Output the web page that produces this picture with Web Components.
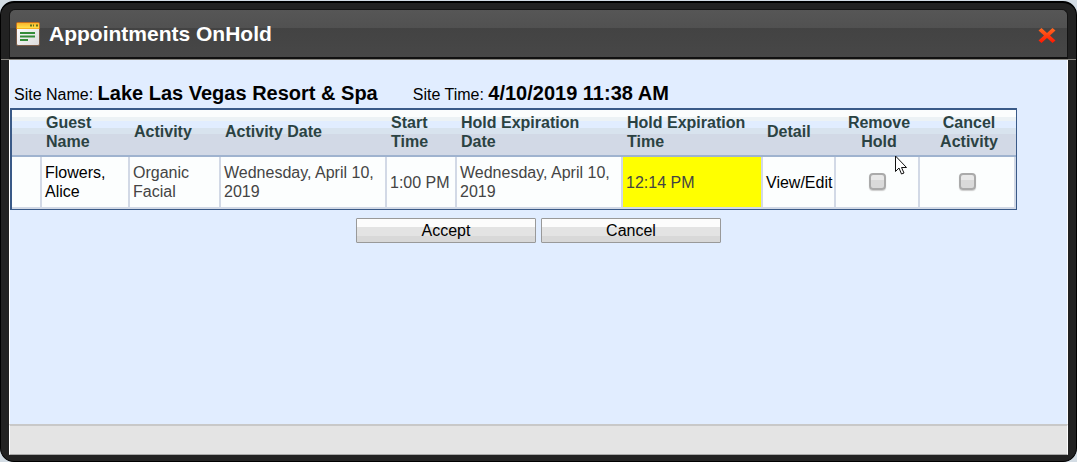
<!DOCTYPE html>
<html lang="en">
<head>
<meta charset="utf-8">
<title>Appointments OnHold</title>
<style>
    html, body {
        margin: 0;
        height: 100%;
    }
    body {
        background: #d3dce4;
        font-family: "Liberation Sans", Arial, sans-serif;
        font-size: 16px;
        line-height: 19px;
        color: #000;
        overflow: hidden;
    }
</style>
</head>
<body>
<modal-window heading="Appointments OnHold">
    <site-info></site-info>
    <hold-table></hold-table>
    <action-bar></action-bar>
</modal-window>
<mouse-pointer></mouse-pointer>

<script>
class ModalWindow extends HTMLElement {
    constructor() {
        super()
        this.attachShadow({ mode: 'open' })
    }

    connectedCallback() {
        this.render()
    }

    static get styles() {
        return `
        :host {
            display: block;
            box-sizing: border-box;
            height: 100vh;
            padding-top: 1px;
        }
        .frame {
            box-sizing: border-box;
            height: 100%;
            display: flex;
            flex-direction: column;
            background: #222;
            border: 1px solid #000;
            border-top-width: 2px;
            border-bottom-width: 1px;
            border-radius: 14px;
            padding: 6px 8px;
        }
        header {
            box-sizing: border-box;
            height: 50px;
            flex: none;
            display: flex;
            align-items: center;
            padding: 0 11px 0 6px;
            border: 1px solid #141414;
            border-bottom: 2px solid #111;
            border-radius: 6px 6px 0 0;
            background: linear-gradient(#565656, #515151 18px, #434343 18px, #474747);
        }
        .rule {
            flex: none;
            height: 1px;
            margin: 0 -8px;
            background: #8a8882;
        }
        h1 {
            flex: 1;
            margin: 0 0 0 9px;
            font-size: 21px;
            line-height: 24px;
            color: #fff;
        }
        button {
            width: 18px;
            height: 18px;
            margin-top: 4px;
            padding: 0;
            border: 0;
            background: none;
        }
        svg {
            display: block;
        }
        main {
            flex: 1;
            padding: 20px 0 0;
            background: #e1edff;
            border-left: 1px solid #fff;
            border-right: 1px solid #fff;
        }
        footer {
            flex: none;
            height: 28px;
            background: #e4e4e4;
            border-top: 2px solid #c8c8c8;
            border-left: 1px solid #fff;
            border-right: 1px solid #fff;
            border-bottom: 1px solid #a8a8a8;
        }
        `
    }

    render() {
        this.shadowRoot.innerHTML = `
        <style>${ModalWindow.styles}</style>
        <div class="frame">
            <header>
                <svg width="24" height="24" viewBox="0 0 24 24" aria-hidden="true">
                    <defs>
                        <linearGradient id="bar" x2="0" y2="1"><stop stop-color="#f9b52c"/><stop offset="1" stop-color="#ffe04a"/></linearGradient>
                        <linearGradient id="sheet" x2="1" y2="1"><stop stop-color="#fff"/><stop offset="1" stop-color="#dcdcdc"/></linearGradient>
                    </defs>
                    <rect x=".5" y=".5" width="23" height="23" rx="1.5" fill="url(#sheet)" stroke="#7a5c48"/>
                    <path d="M1 1h22v5H1z" fill="url(#bar)"/>
                    <path d="M.5 7V1.500q0-1 1-1h21q1 0 1 1V7" fill="none" stroke="#c5701c"/>
                    <path d="M1 6.500h22" stroke="#f5b020"/>
                    <path d="M14 3.500h2M17 3.500h1M20 3.500h2" stroke="#5f7420" stroke-width="2"/>
                    <path d="M4 11h15M4 14.500h15M4 18h8" stroke="#348c38" stroke-width="2"/>
                </svg>
                <h1>${this.getAttribute('heading')}</h1>
                <button type="button" aria-label="Close">
                    <svg width="18" height="18" viewBox="0 0 18 18">
                        <defs><linearGradient id="red" x2="0" y2="1"><stop stop-color="#ff6a20"/><stop offset="1" stop-color="#ff1500"/></linearGradient></defs>
                        <path d="M.5 3.500L3.500 1 9 6l5.500-5 3 2.500L12 8.500l5.500 5-3 2.500L9 11l-5.500 5-3-2.500 5.500-5z" fill="url(#red)"/>
                    </svg>
                </button>
            </header>
            <div class="rule"></div>
            <main><slot></slot></main>
            <footer></footer>
        </div>`
    }
}

customElements.define('modal-window', ModalWindow)


class SiteInfo extends HTMLElement {
    constructor() {
        super()
        this.attachShadow({ mode: 'open' })
    }

    connectedCallback() {
        this.shadowRoot.innerHTML = `
        <style>
        :host {
            display: flex;
            align-items: baseline;
            gap: 35px;
            padding: 1px 0 1px 4px;
            line-height: 25px;
        }
        b {
            font-size: 20px;
        }
        </style>
        <span>Site Name: <b>Lake Las Vegas Resort &amp; Spa</b></span>
        <span>Site Time: <b>4/10/2019 11:38 AM</b></span>`
    }
}

customElements.define('site-info', SiteInfo)


class HoldTable extends HTMLElement {
    constructor() {
        super()
        this.attachShadow({ mode: 'open' })
    }

    connectedCallback() {
        this.render()
    }

    static get styles() {
        return `
        :host {
            display: block;
            margin-right: 50px;
        }
        table {
            width: 100%;
            table-layout: fixed;
            border-collapse: separate;
            border-spacing: 0;
            border: 1px solid #3a5a88;
            border-width: 2px 1px 1px 2px;
        }
        th, td {
            box-sizing: border-box;
            padding: 0 0 0 3px;
            text-align: left;
            vertical-align: middle;
        }
        th {
            height: 47px;
            padding: 0 2px 2px 4px;
            color: #2b4242;
            border-bottom: 2px solid #9fb3cf;
        }
        thead tr {
            background: linear-gradient(#fbfdfd 7px, #ecf2f5 7px 11px, #e1edff 11px 18px, #d8e3ee 18px 24px, #d2d9e6 24px);
        }
        td {
            height: 52px;
            color: #444;
            background: #fcfefe;
            border-right: 2px solid #d2d9e6;
            border-bottom: 2px solid #d2d9e6;
        }
        td.late {
            background: #ff0;
        }
        .mid {
            text-align: center;
        }
        td.mid {
            padding: 0;
        }
        a {
            color: #000;
            text-decoration: none;
        }
        .one-line {
            white-space: nowrap;
        }
        input {
            appearance: none;
            display: block;
            box-sizing: border-box;
            width: 17px;
            height: 17px;
            margin: 0 auto 2px;
            border: 2px solid #aaa;
            border-radius: 4px;
            background: linear-gradient(#e8e8e8 5px, #dadada 5px);
            box-shadow: 0 1px 1px #ccc;
        }
        input:checked {
            background: #555;
        }
        `
    }

    render() {
        const widths = [30, 88, 91, 166, 70, 166, 140, 73, 84, 96]

        this.shadowRoot.innerHTML = `
        <style>${HoldTable.styles}</style>
        <table>
            <colgroup>${widths.map(w => `<col style="width:${w}px">`).join('')}</colgroup>
            <thead>
                <tr>
                    <th></th>
                    <th>Guest<br>Name</th>
                    <th>Activity</th>
                    <th>Activity Date</th>
                    <th>Start<br>Time</th>
                    <th>Hold Expiration<br>Date</th>
                    <th>Hold Expiration<br>Time</th>
                    <th>Detail</th>
                    <th class="mid" id="remove">Remove<br>Hold</th>
                    <th class="mid" id="cancel">Cancel<br>Activity</th>
                </tr>
            </thead>
            <tbody>
                <tr>
                    <td></td>
                    <td><a href="#guest">Flowers,<br>Alice</a></td>
                    <td>Organic<br>Facial</td>
                    <td>Wednesday, April 10, 2019</td>
                    <td class="one-line">1:00 PM</td>
                    <td>Wednesday, April 10, 2019</td>
                    <td class="late">12:14 PM</td>
                    <td class="one-line"><a href="#detail">View/Edit</a></td>
                    <td class="mid"><input type="checkbox" aria-labelledby="remove"></td>
                    <td class="mid"><input type="checkbox" aria-labelledby="cancel"></td>
                </tr>
            </tbody>
        </table>`
    }
}

customElements.define('hold-table', HoldTable)


class ActionBar extends HTMLElement {
    constructor() {
        super()
        this.attachShadow({ mode: 'open' })
    }

    connectedCallback() {
        this.shadowRoot.innerHTML = `
        <style>
        :host {
            display: flex;
            justify-content: center;
            gap: 5px;
            padding-top: 8px;
        }
        button {
            box-sizing: border-box;
            width: 180px;
            height: 25px;
            padding: 0;
            font: inherit;
            color: #000;
            border: 1px solid #999;
            border-radius: 1px;
            background: linear-gradient(#fcfcfc 8px, #e3e3e3 8px 17px, #d8d8d8 17px);
        }
        </style>
        <button type="button">Accept</button>
        <button type="button">Cancel</button>`
    }
}

customElements.define('action-bar', ActionBar)


class MousePointer extends HTMLElement {
    constructor() {
        super()
        this.attachShadow({ mode: 'open' })
    }

    connectedCallback() {
        this.shadowRoot.innerHTML = `
        <style>
        :host {
            position: absolute;
            left: 895px;
            top: 155px;
            pointer-events: none;
        }
        svg {
            display: block;
        }
        </style>
        <svg width="13" height="20" viewBox="0 0 13 20" aria-hidden="true">
            <path d="M.5 1v15.500l3.500-3.500 2.500 6 2.500-1-2.500-5.500h5z" fill="#fff" stroke="#111"/>
        </svg>`
    }
}

customElements.define('mouse-pointer', MousePointer)
</script>
</body>
</html>
